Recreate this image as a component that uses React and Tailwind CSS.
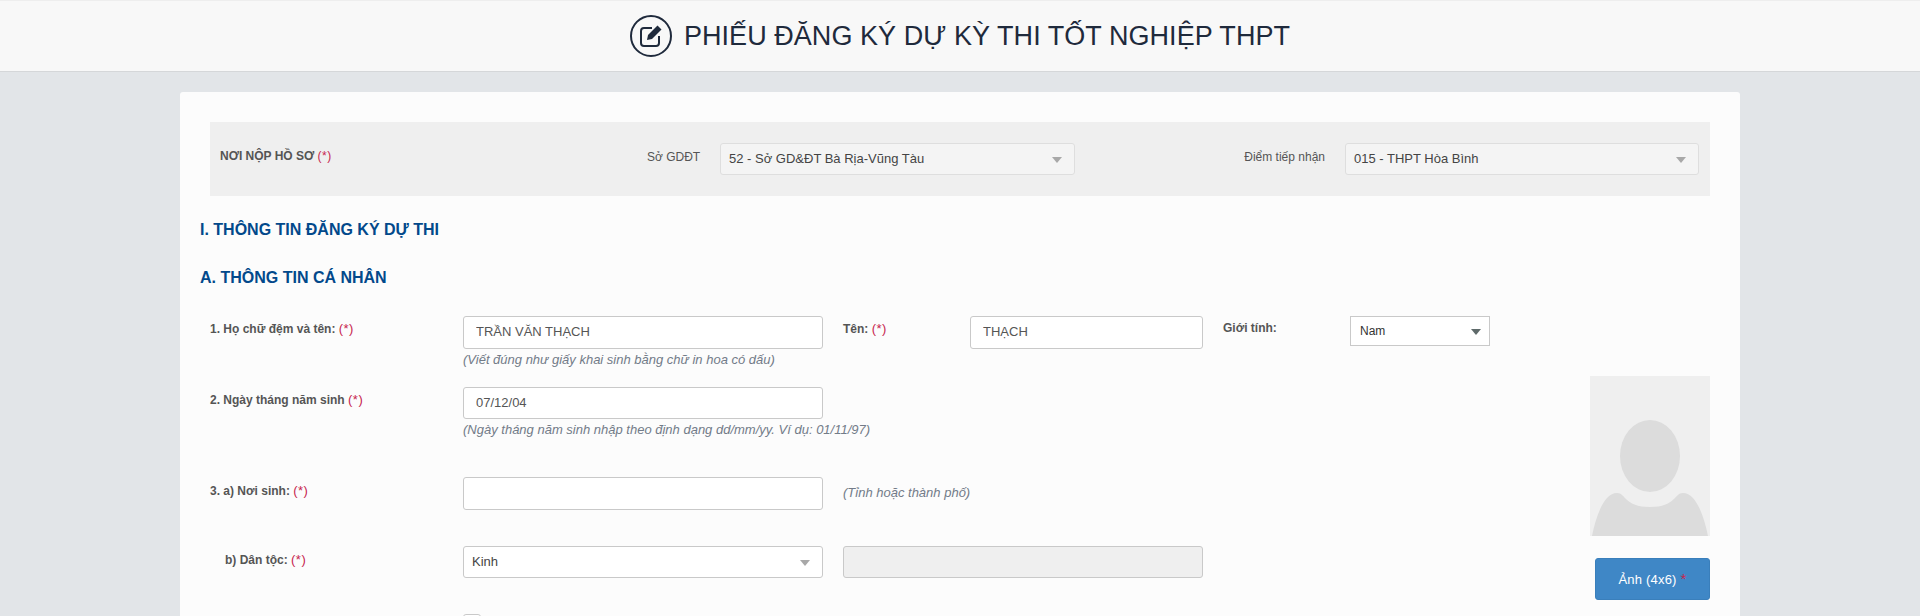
const Arrow = ({ color = "border-t-[#a8a8a8]", mr = "mr-[12px]" }) => (
  <span className={`${mr} mt-[2px] w-0 h-0 border-x-[5px] border-x-transparent border-t-[6px] ${color}`} />
);

const Req = ({ size = "text-[13px]" }) => <span className={`${size} text-[#c7254e] font-normal tracking-[0.5px]`}>(*)</span>;

const TextInput = ({ value = "", w, h = "h-[33px]" }) => (
  <input
    readOnly
    value={value}
    className={`${w} ${h} block bg-white border border-[#c9c9c9] rounded-[3px] pl-[12px] pb-[2px] text-[13px] text-[#555] outline-none`}
  />
);

const Sel = ({ text, w, bg = "bg-white", border = "border-[#c9c9c9]" }) => (
  <div className={`${w} h-[32px] ${bg} border ${border} rounded-[3px] pl-[8px] flex items-center justify-between text-[13px] text-[#444]`}>
    <span>{text}</span>
    <Arrow />
  </div>
);

const Label = ({ children, className = "" }) => (
  <div className={`text-[12px] font-bold text-[#555] ${className}`}>{children}</div>
);

const Hint = ({ children, className = "" }) => (
  <div className={`text-[13px] italic text-[#727b88] ${className}`}>{children}</div>
);

export default function App() {
  return (
    <div className="h-[616px] overflow-hidden bg-[#e2e5e8] font-['Liberation_Sans',Arial,sans-serif]">
      <header className="h-[72px] bg-[#f8f8f8] border-t border-t-[#eeeeee] border-b border-b-[#d5d7d9] flex items-center justify-center gap-3">
        <svg width="42" height="42" viewBox="0 0 42 42" fill="none">
          <circle cx="21" cy="21" r="20" stroke="#1f2a3c" strokeWidth="2" />
          <path d="M22 13h-8a3 3 0 0 0-3 3v12a3 3 0 0 0 3 3h12a3 3 0 0 0 3-3v-7" stroke="#1f2a3c" strokeWidth="2" fill="none" />
          <path d="M27.5 10.5l4 4L22 24l-5 1 1-5z" fill="#1f2a3c" />
        </svg>
        <h1 className="text-[27px] font-normal text-[#1f2a3c] leading-none tracking-[0.05px]">PHIẾU ĐĂNG KÝ DỰ KỲ THI TỐT NGHIỆP THPT</h1>
      </header>

      <main className="mx-[180px] mt-[20px] bg-[#fcfcfc] rounded-t-[3px] pt-[30px] h-[600px]">
        <section className="mx-[30px] h-[74px] bg-[#efefef] flex items-start pt-[21px] pl-[10px]">
          <div className="w-[427px] pt-[4px] text-[12px] font-bold text-[#555]">NƠI NỘP HỒ SƠ <Req size="text-[12px]" /></div>
          <div className="w-[73px] pt-[5px] text-[12px] text-[#555]">Sở GDĐT</div>
          <Sel text="52 - Sở GD&ĐT Bà Rịa-Vũng Tàu" w="w-[355px]" bg="bg-[#f4f4f4]" border="border-[#dedede]" />
          <div className="w-[270px] pr-[20px] pt-[5px] text-[12px] text-[#555] text-right">Điểm tiếp nhận</div>
          <Sel text="015 - THPT Hòa Bình" w="w-[354px]" bg="bg-[#f4f4f4]" border="border-[#dedede]" />
        </section>

        <h2 className="ml-[20px] mt-[25px] text-[16px] leading-[18px] font-bold text-[#02498b]">I. THÔNG TIN ĐĂNG KÝ DỰ THI</h2>
        <h2 className="ml-[20px] mt-[30px] text-[16px] leading-[18px] font-bold text-[#02498b]">A. THÔNG TIN CÁ NHÂN</h2>

        <div className="mt-[29px] px-[30px] flex">
          <div className="flex-1">
            <div className="flex h-[71px]">
              <Label className="w-[253px] pt-[3px]">1. Họ chữ đệm và tên: <Req /></Label>
              <div className="w-[360px]">
                <TextInput value="TRẦN VĂN THẠCH" w="w-[360px]" />
                <Hint className="mt-[1px]">(Viết đúng như giấy khai sinh bằng chữ in hoa có dấu)</Hint>
              </div>
              <Label className="ml-[20px] w-[127px] pt-[3px]">Tên: <Req /></Label>
              <TextInput value="THẠCH" w="w-[233px]" />
              <Label className="ml-[20px] w-[127px] pt-[3px]">Giới tính:</Label>
              <div className="w-[140px] h-[30px] bg-white border border-[#c9c9c9] pl-[9px] flex items-center justify-between text-[12px] text-[#333]">
                <span>Nam</span>
                <Arrow color="border-t-[#5f6a6a]" mr="mr-[8px]" />
              </div>
            </div>

            <div className="flex h-[90px]">
              <Label className="w-[253px] pt-[3px]">2. Ngày tháng năm sinh <Req /></Label>
              <div className="w-[360px]">
                <TextInput value="07/12/04" w="w-[360px]" h="h-[32px]" />
                <Hint className="mt-[1px] whitespace-nowrap">(Ngày tháng năm sinh nhập theo định dạng dd/mm/yy. Ví dụ: 01/11/97)</Hint>
              </div>
            </div>

            <div className="flex h-[69px]">
              <Label className="w-[253px] pt-[4px]">3. a) Nơi sinh: <Req /></Label>
              <TextInput w="w-[360px]" />
              <Hint className="ml-[20px] pt-[6px]">(Tỉnh hoặc thành phố)</Hint>
            </div>

            <div className="flex h-[68px]">
              <Label className="w-[253px] pl-[15px] pt-[4px]">b) Dân tộc: <Req /></Label>
              <Sel text="Kinh" w="w-[360px]" />
              <input readOnly className="ml-[20px] w-[360px] h-[32px] bg-[#efefef] border border-[#c9c9c9] rounded-[3px] outline-none" />
            </div>

            <div className="ml-[253px] w-[18px] h-[18px] bg-white border border-[#c9c9c9] rounded-[3px]" />
          </div>

          <aside className="w-[120px] pt-[60px]">
            <svg width="120" height="160" viewBox="0 0 120 160" className="block bg-[#efefef]">
              <ellipse cx="60" cy="80" rx="30" ry="36" fill="#dcdcdc" />
              <path d="M2 160C6 140 14 117 27 117C36 117 34 131 60 131C86 131 84 117 93 117C106 117 114 140 118 160Z" fill="#dcdcdc" />
            </svg>
            <button className="mt-[22px] ml-[5px] w-[115px] h-[42px] bg-[#3f87c6] border border-[#3a7fbb] rounded-[3px] text-[13px] tracking-[0.2px] text-white">
              Ảnh (4x6) <span className="text-[15px] text-[#c7254e]">*</span>
            </button>
          </aside>
        </div>
      </main>
    </div>
  );
}
